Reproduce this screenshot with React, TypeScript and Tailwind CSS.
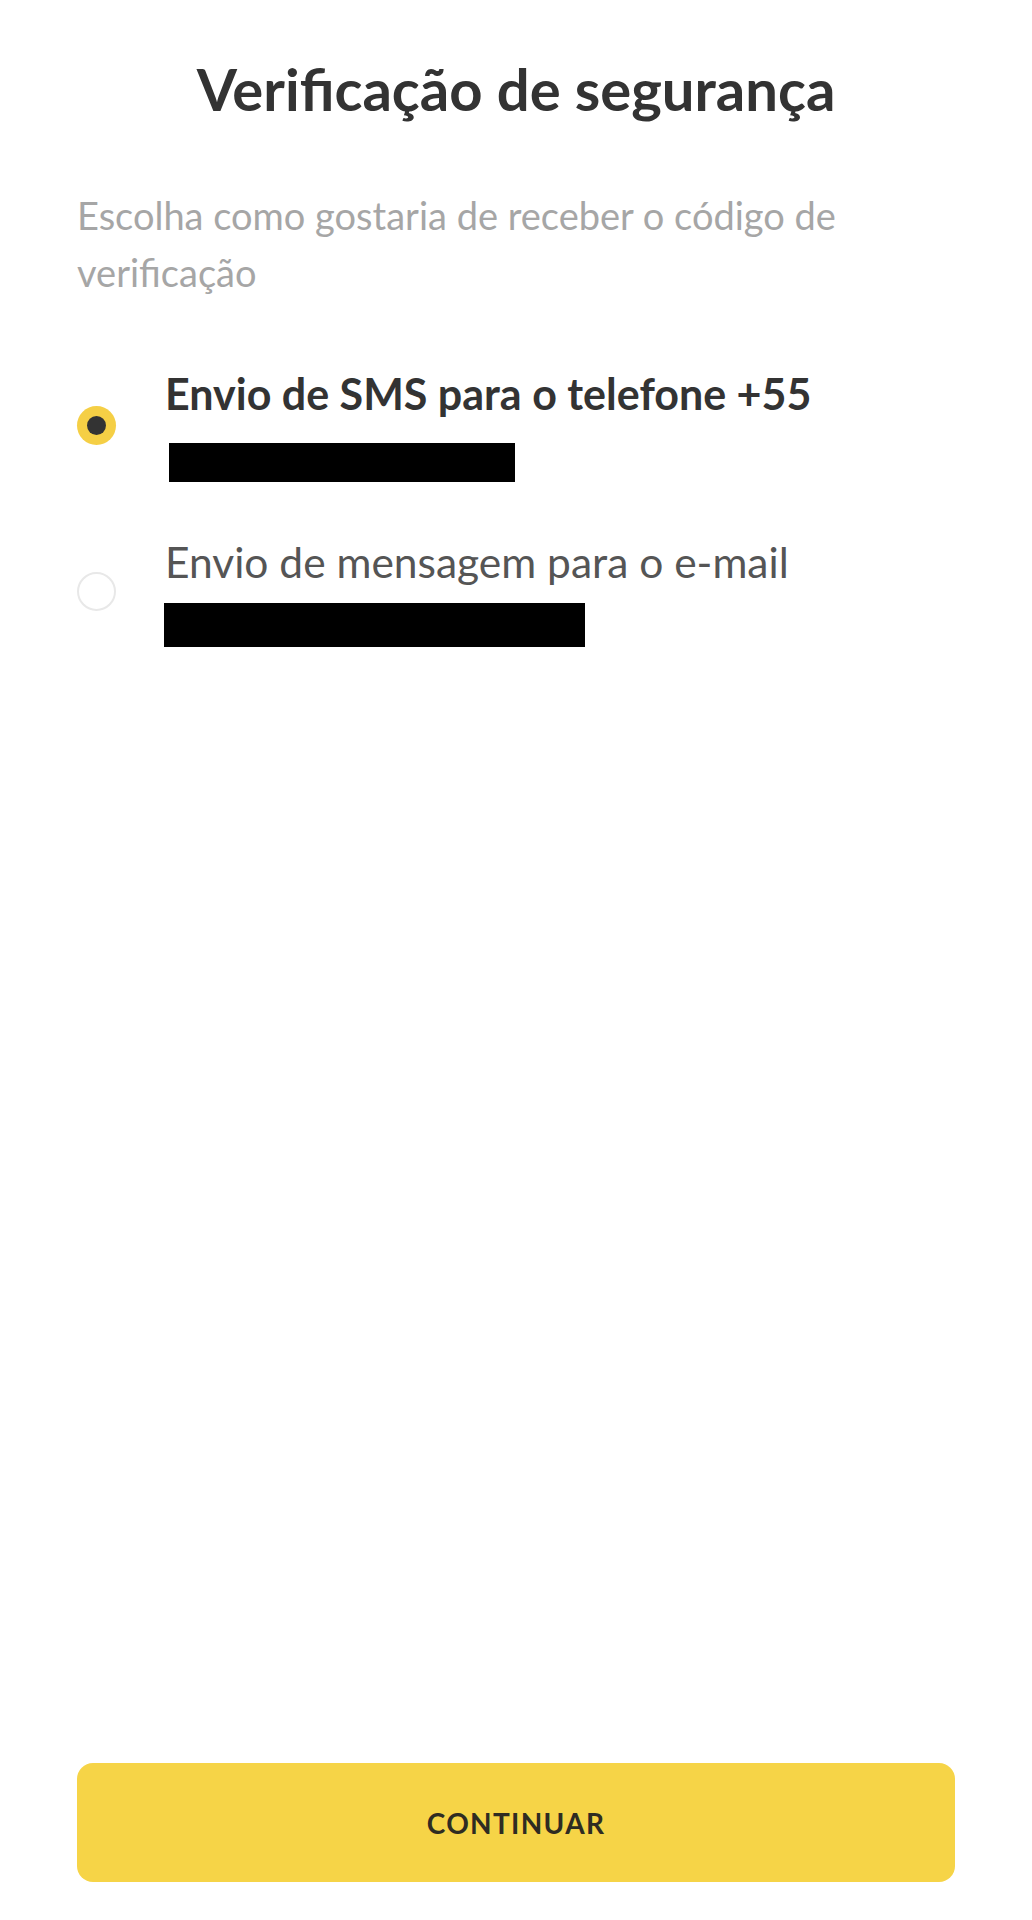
import { useState } from "react";

const options = [
  {
    id: "sms",
    label: "Envio de SMS para o telefone +55",
    maskClass: "mt-[23px] ml-[4px] w-[346px] h-[39px]",
  },
  {
    id: "email",
    label: "Envio de mensagem para o e-mail",
    maskClass: "mt-[15px] ml-[-1px] w-[421px] h-[44px]",
  },
];

export default function App() {
  const [selected, setSelected] = useState("sms");

  return (
    <div
      className="min-h-[1920px] bg-white flex flex-col px-[77px]"
      style={{ fontFamily: "Lato, 'Open Sans', sans-serif" }}
    >
      {/* Title */}
      <h1 className="pt-[53px] text-center text-[58px] leading-[72px] font-bold text-[#333333]">
        Verificação de segurança
      </h1>

      {/* Subtitle */}
      <p className="mt-[62px] text-[38px] leading-[57px] text-[#a6a6a6]">
        Escolha como gostaria de receber o código de verificação
      </p>

      {/* Options */}
      <div className="mt-[67px] flex flex-col gap-[54px]">
        {options.map((opt) => {
          const active = selected === opt.id;
          return (
            <button
              key={opt.id}
              onClick={() => setSelected(opt.id)}
              className="flex items-center text-left"
            >
              <span
                className={`w-[39px] h-[39px] rounded-full flex items-center justify-center shrink-0 ${
                  active ? "bg-[#f5cf45]" : "border-2 border-[#e8e8e8]"
                }`}
              >
                {active && <span className="w-[19px] h-[19px] rounded-full bg-[#333333]" />}
              </span>
              <span className="ml-[49px] flex flex-col">
                <span
                  className={`leading-[52px] ${
                    active
                      ? "text-[43px] font-bold text-[#333333]"
                      : "text-[42.5px] text-[#555555]"
                  }`}
                >
                  {opt.label}
                </span>
                <span className={`bg-black ${opt.maskClass}`} />
              </span>
            </button>
          );
        })}
      </div>

      <div className="flex-1" />

      {/* Button */}
      <button className="mb-[38px] h-[119px] w-full rounded-[16px] bg-[#f6d447] text-[28px] font-bold text-[#2f2c22] tracking-[1.3px]">
        CONTINUAR
      </button>
    </div>
  );
}
